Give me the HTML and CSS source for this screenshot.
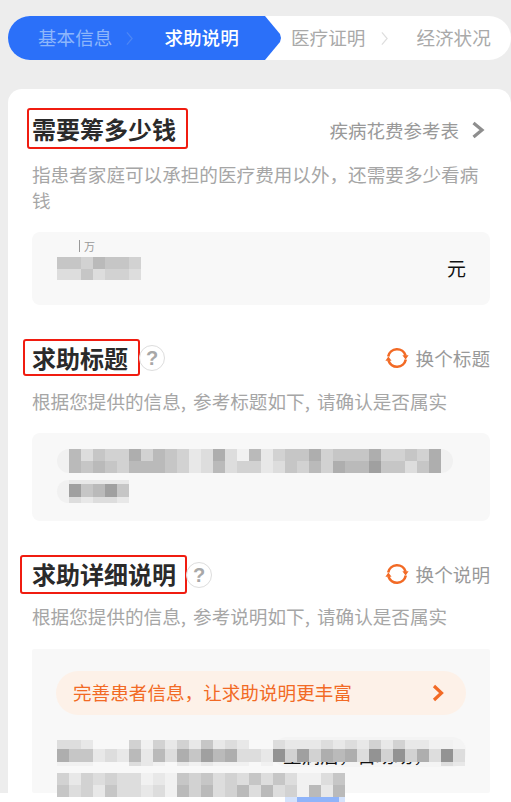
FILE: index.html
```html
<!DOCTYPE html>
<html lang="zh-CN">
<head>
<meta charset="utf-8">
<title>求助说明</title>
<link rel="stylesheet" href="styles.css">
</head>
<body>
<nav class="stepper">
  <div class="steps-done">
    <span class="step step-faded">基本信息</span>
    <svg class="step-chevron" viewBox="0 0 8 16"><polyline points="1,1 7,8 1,15"/></svg>
    <span class="step step-current">求助说明</span>
  </div>
  <span class="step step-next">医疗证明</span>
  <svg class="step-chevron step-chevron-light" viewBox="0 0 8 16"><polyline points="1,1 7,8 1,15"/></svg>
  <span class="step step-last">经济状况</span>
</nav>

<main class="card">
  <section>
    <header class="head head-first">
      <h2 class="title title-a">需要筹多少钱</h2>
      <a class="action"><span class="action-text">疾病花费参考表</span>
        <svg class="more" viewBox="0 0 14 18"><polyline points="2.5,2 11,9 2.5,16"/></svg>
      </a>
    </header>
    <p class="desc">指患者家庭可以承担的医疗费用以外，还需要多少看病钱</p>
    <div class="box amount">
      <span class="hint">万</span>
      <span class="unit">元</span>
      <div class="mosaic mosaic-amount" data-rows="5546554|3353443"></div>
    </div>
  </section>

  <section class="sec">
    <header class="head head-second">
      <h2 class="title title-b">求助标题</h2>
      <span class="help">?</span>
      <a class="action action-swap">
        <svg class="swap" viewBox="0 0 24 24"><path d="M3.2 10.5A9 9 0 0 1 20.6 9.6"/><path d="M20.8 13.5A9 9 0 0 1 3.4 14.4"/><path class="tip" d="M0.4 14.8 3.4 10.6 6.6 14.8Z"/><path class="tip" d="M17.4 9.2 20.6 13.4 23.6 9.2Z"/></svg>
        换个标题</a>
    </header>
    <p class="desc">根据您提供的信息, 参考标题如下, 请确认是否属实</p>
    <div class="box box-title">
      <div class="mosaic mosaic-line" data-rows="6354474654237316245574555744547|6565466654236344235464766855357"></div>
      <div class="mosaic mosaic-short" data-rows="22222|85685|32332"></div>
    </div>
  </section>

  <section class="sec">
    <header class="head head-third">
      <h2 class="title title-c">求助详细说明</h2>
      <span class="help">?</span>
      <a class="action action-swap">
        <svg class="swap" viewBox="0 0 24 24"><path d="M3.2 10.5A9 9 0 0 1 20.6 9.6"/><path d="M20.8 13.5A9 9 0 0 1 3.4 14.4"/><path class="tip" d="M0.4 14.8 3.4 10.6 6.6 14.8Z"/><path class="tip" d="M17.4 9.2 20.6 13.4 23.6 9.2Z"/></svg>
        换个说明</a>
    </header>
    <p class="desc desc-tight">根据您提供的信息, 参考说明如下, 请确认是否属实</p>
    <div class="box box-story">
      <a class="banner"><span class="banner-text">完善患者信息，让求助说明更丰富</span>
        <svg class="banner-arrow" viewBox="0 0 12 18"><polyline points="2,2 9.5,9 2,16"/></svg>
      </a>
      <div class="blob"></div>
      <div class="peek">生病后，目助助，</div>
      <div class="mosaic mosaic-para-top" data-rows="3320004142425232003222323242422110|7552326263758673329484767394947393|1110003210212111010000000000000032"></div>
      <div class="mosaic mosaic-para-bottom" data-rows="424343312154534353531135|534253323164634636341626"></div>
    </div>
  </section>
</main>

<footer class="strip"><span class="chip"></span></footer>
<script src="mosaic.js"></script>
</body>
</html>
```

FILE: styles.css
```css
* { box-sizing: border-box; }
html, body { margin: 0; padding: 0; }
body {
  width: 511px;
  height: 802px;
  overflow: hidden;
  background: #ededed;
  font-family: "Noto Sans CJK SC", "Noto Sans", sans-serif;
  font-size: 18.6px;
  color: #222;
}

/* stepper */
.stepper {
  display: flex;
  align-items: center;
  height: 44px;
  margin: 16px 0 0 8px;
  background: #fff;
  border-radius: 22px;
  color: #a9a9a9;
  line-height: 26px;
}
.steps-done {
  display: flex;
  align-items: center;
  flex: 0 0 273px;
  height: 44px;
  padding-left: 30px;
  background: #2b70f9;
  border-radius: 22px 0 0 22px;
  clip-path: polygon(0 0, 257px 0, 272px 18px, 273px 22px, 272px 26px, 257px 44px, 0 44px);
}
.step { white-space: nowrap; margin-bottom: 3px; }
.step-faded { color: #8db6fb; }
.step-current { color: #fff; font-weight: 500; margin-left: 31px; }
.step-next { margin-left: 10px; }
.step-last { margin-left: 28px; }
.step-chevron {
  width: 7px;
  height: 15px;
  margin-left: 14px;
  fill: none;
  stroke: #4c86f5;
  stroke-width: 1.4;
}
.step-chevron-light { stroke: #dedede; margin-left: 16px; }

/* card */
.card {
  height: 704px;
  margin: 29px 0 0 8px;
  padding: 19px 21px 0 24px;
  background: #fff;
  border-radius: 14px 14px 0 0;
}
.sec { margin-top: 34px; }
.head { display: flex; align-items: center; }
.head-first { height: 41px; }
.head-second { height: 37px; }
.head-third { height: 39px; }
.title {
  height: 100%;
  margin: 0;
  border: 2px solid #f01c10;
  border-radius: 3px;
  font-size: 24px;
  font-weight: 700;
  line-height: 33px;
  white-space: nowrap;
  color: #2a2a2a;
}
.title-a { margin-left: -5px; padding: 2px 10px 0 3px; }
.title-b { margin-left: -9px; padding: 0 10px 0 7px; }
.title-c { margin-left: -12px; padding: 0 9px 0 10px; }
.help {
  flex: none;
  width: 26px;
  height: 26px;
  margin-left: -1px;
  border: 1px solid #ddd;
  border-radius: 50%;
  background: #fff;
  font-family: "Liberation Sans", sans-serif;
  font-size: 20px;
  font-weight: 700;
  line-height: 24px;
  text-align: center;
  color: #a8a8a8;
}
.action {
  display: flex;
  align-items: center;
  margin-left: auto;
  color: #999;
  white-space: nowrap;
}
.action-text { margin-top: 3px; font-size: 18.5px; }
.head-third .action { margin-bottom: 2px; }
.more {
  width: 14px;
  height: 18px;
  margin: 2px 5px 0 12px;
  fill: none;
  stroke: #8e8e8e;
  stroke-width: 3.2;
}
.swap {
  width: 24px;
  height: 24px;
  margin-right: 7px;
  margin-left: -1px;
  fill: none;
  stroke: #f26a25;
  stroke-width: 2.6;
}
.swap .tip { fill: #f26a25; stroke: none; }
.desc {
  margin: 12px 0 0;
  color: #a6a6a6;
  line-height: 26px;
  word-spacing: 3px;
}
.desc-tight { margin-top: 9px; }

/* value boxes */
.box {
  position: relative;
  margin-top: 19px;
  background: #f8f8f8;
  border-radius: 8px;
}
.box-story { margin-top: 20px; }
.amount {
  display: flex;
  align-items: center;
  justify-content: space-between;
  height: 73px;
  padding: 0 24px 0 47px;
}
.hint {
  align-self: flex-start;
  margin-top: 8px;
  padding-left: 4px;
  border-left: 1px solid #999;
  height: 12px;
  font-size: 11px;
  line-height: 12px;
  color: #999;
}
.unit { color: #111; font-size: 19px; margin-bottom: 3px; }
.box-title { height: 88px; }
.box-story {
  height: 144px;
  padding: 22px 24px 0;
  border-radius: 2px;
}
.banner {
  display: flex;
  align-items: center;
  justify-content: space-between;
  height: 44px;
  padding: 0 22px 0 17px;
  background: #fdf1e8;
  border-radius: 22px;
  color: #f26a25;
}
.banner-text { margin-bottom: 3px; }
.banner-arrow {
  width: 12px;
  height: 18px;
  fill: none;
  stroke: #f26a25;
  stroke-width: 3.2;
}

/* privacy mosaics lying over the text */
.mosaic { position: absolute; left: 25px; display: grid; }
.row { display: flex; }
.cell { flex: 0 0 12px; width: 12px; }
.mosaic-amount { top: 25px; grid-template-rows: 12px 11px; }
.mosaic-line {
  top: 16px;
  padding: 0 12px;
  grid-template-rows: 12px 12px;
  background: #f1f1f1;
  border-radius: 12px;
}
.mosaic-short {
  top: 47px;
  padding-left: 12px;
  grid-template-rows: 4px 13px 6px;
  background: #f1f1f1;
  border-radius: 12px 0 0 12px;
}
.mosaic-para-top { top: 91px; grid-template-rows: 9px 13px 4px; }
.mosaic-para-bottom { top: 124px; grid-template-rows: 12px 12px; }
.g0 { background: transparent; }
.g1 { background: #f1f1f1; }
.g2 { background: #e8e8e8; }
.g3 { background: #dddddd; }
.g4 { background: #d2d2d2; }
.g5 { background: #c6c6c6; }
.g6 { background: #bababa; }
.g7 { background: #aeaeae; }
.g8 { background: #a0a0a0; }
.g9 { background: #939393; }

.blob {
  position: absolute;
  left: 241px;
  top: 88px;
  width: 193px;
  height: 30px;
  background: #f4f4f4;
  border-radius: 14px;
}
.peek {
  position: absolute;
  left: 251px;
  top: 96px;
  color: #111;
  white-space: nowrap;
  line-height: 20px;
}

/* bottom strip */
.strip {
  display: flex;
  align-items: flex-end;
  height: 9px;
  padding-left: 285px;
  background: #fff;
}
.chip {
  width: 60px;
  height: 5px;
  background: linear-gradient(90deg, #d5e3fc 20%, #8fb4fa 20%, #8fb4fa 90%, #d5e3fc 90%);
}
```

FILE: mosaic.js
```js
document.querySelectorAll(".mosaic").forEach(function (m) {
  m.dataset.rows.split("|").forEach(function (r) {
    var row = document.createElement("div");
    row.className = "row";
    r.split("").forEach(function (d) {
      var c = document.createElement("span");
      c.className = "cell g" + d;
      row.appendChild(c);
    });
    m.appendChild(row);
  });
});
```
